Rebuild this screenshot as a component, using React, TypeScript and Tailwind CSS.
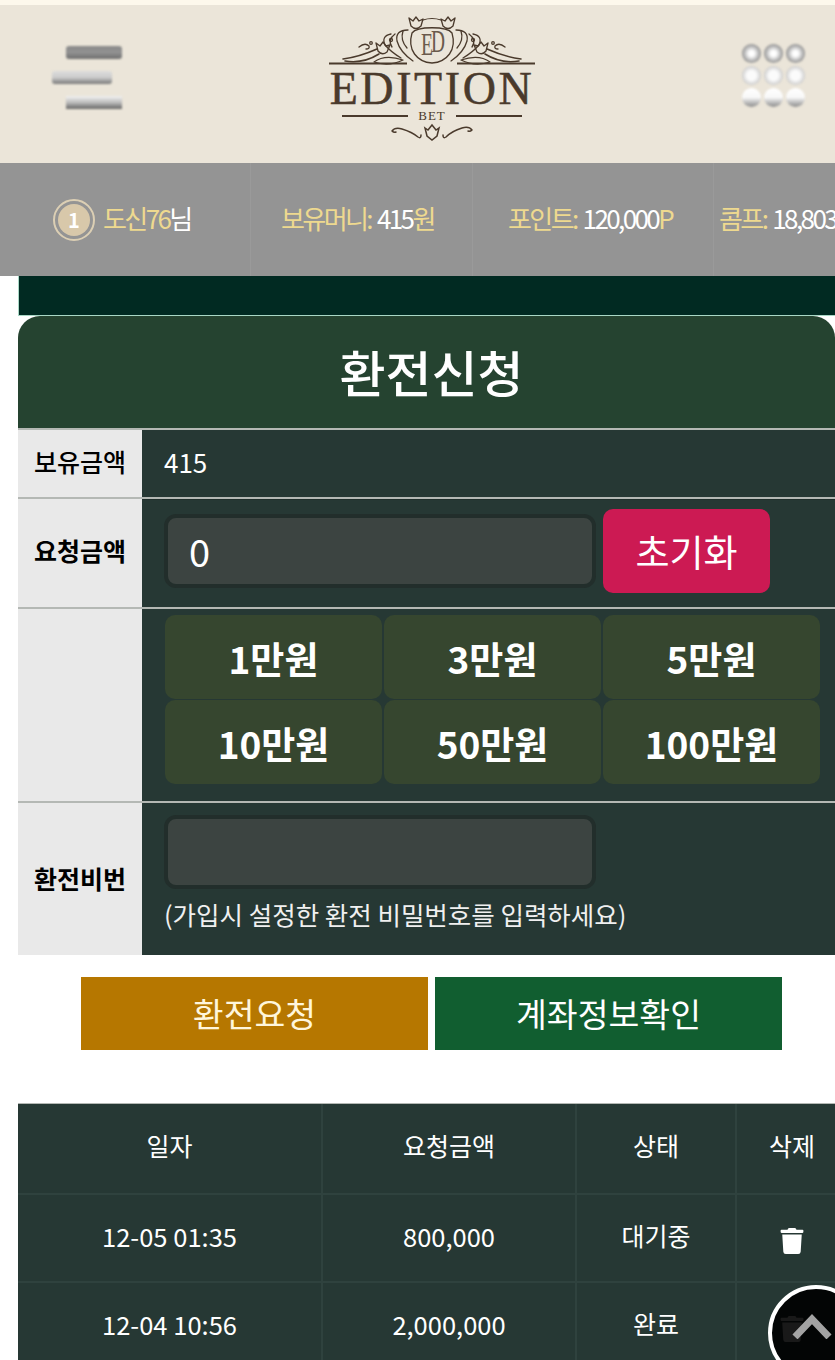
import { FaTrash } from 'react-icons/fa';

const amounts = ['1만원', '3만원', '5만원', '10만원', '50만원', '100만원'];

const history = [
  { date: '12-05 01:35', amount: '800,000', status: '대기중' },
  { date: '12-04 10:56', amount: '2,000,000', status: '완료' },
];

function LogoHalf() {
  return (
    <g fill="none" stroke="#4a3a2c" strokeWidth="1.3" strokeLinecap="round" strokeLinejoin="round">
      {/* top tulip */}
      <path d="M80 2 L84 5 L87 1 L90 5 L94 3 L92 10 Q87 15 82 10 Z" />
      {/* side scrolls */}
      <path d="M79 14 Q66 14 68 25 Q71 36 84 45" />
      <path d="M74 15 Q71 24 78 32" />
      <path d="M62 18 Q52 20 56 29 Q62 36 72 42" />
      <path d="M66 18 Q58 24 63 31" />
      <circle cx="62" cy="24" r="1.5" />
      {/* small tulip + branch */}
      <path d="M47 27 L51 30 L54 26 L57 30 L61 29 L58 36 Q53 40 49 35 Z" />
      <path d="M14 43 Q30 41 48 33" strokeWidth="1.6" />
      <path d="M16 45 Q34 48 50 38" strokeWidth="1.6" />
      <path d="M30 31 Q36 26 40 30 Q41 33 37 33" />
      <circle cx="42" cy="27" r="1.3" />
      {/* leaf */}
      <path d="M45 46 Q56 38 74 44 Q60 51 45 46 Z" />
    </g>
  );
}

function Logo() {
  return (
    <div className="w-[206px] flex flex-col items-center">
      <svg width="206" height="49" viewBox="0 0 206 49" className="block">
        <LogoHalf />
        <g transform="translate(206,0) scale(-1,1)">
          <LogoHalf />
        </g>
        <path d="M94 4 Q103 1 112 4" fill="none" stroke="#4a3a2c" strokeWidth="1.2" />
        <path
          d="M83 17 C78 34 88 46 103 47 C118 46 128 34 123 17 C118 10 88 10 83 17 Z"
          fill="#ebe5d9"
          stroke="#4a3a2c"
          strokeWidth="1.3"
        />
        <text x="92" y="39" fontFamily="Liberation Serif" fontSize="32" fill="#6a5a4c" textLength="12" lengthAdjust="spacingAndGlyphs">E</text>
        <text x="102" y="36" fontFamily="Liberation Serif" fontSize="32" fill="#6a5a4c" textLength="14" lengthAdjust="spacingAndGlyphs">D</text>
        <path d="M0 47.5 H78 M128 47.5 H206" stroke="#4a3a2c" strokeWidth="1.8" />
      </svg>
      <div className="-mt-[1px] h-[44px] leading-[49px] text-[46px] tracking-[2.6px] whitespace-nowrap font-['Liberation_Serif',serif] text-[#4a3a2c] [-webkit-text-stroke:0.5px_#4a3a2c]">
        EDITION
      </div>
      <div className="flex items-center gap-[10px] h-[15px]">
        <span className="w-[66px] h-[2px] bg-[#4a3a2c]" />
        <span className="text-[13px] leading-[15px] tracking-[1px] font-['Liberation_Serif',serif] text-[#4a3a2c]">BET</span>
        <span className="w-[66px] h-[2px] bg-[#4a3a2c]" />
      </div>
      <svg width="84" height="18" viewBox="0 0 84 18" className="block" fill="none" stroke="#4a3a2c" strokeWidth="1.5" strokeLinecap="round">
        <path d="M2 8 Q5 4 12 6 Q22 9 28 14 Q31 16 31 12 M2 8 Q4 10 6 9" />
        <path d="M82 7 Q79 3 72 5 Q62 8 56 14 Q53 16 53 12 M82 7 Q80 9 78 8" />
        <path d="M35 5 L38 7 L42 2 L46 7 L49 5 L47 13 L42 17 L37 13 Z" />
      </svg>
    </div>
  );
}

function MenuIcon() {
  return (
    <div className="w-[70px] -mt-[14px] flex flex-col gap-[12px] blur-[1px]">
      <span className="ml-[14px] w-[56px] h-[13px] rounded-[3px] bg-linear-to-b from-[#8a8a8a] via-[#929292] to-[#6e6e6e]" />
      <span className="w-[60px] h-[13px] rounded-[3px] bg-linear-to-b from-[#dcdcdc] via-[#cccccc] to-[#777777]" />
      <span className="ml-[14px] w-[56px] h-[13px] bg-linear-to-b from-[#f4f4f4] via-[#bcbcbc] to-[#666666]" />
    </div>
  );
}

function GridIcon() {
  const dots = [
    'bg-[radial-gradient(circle,#ffffff_20%,#b4b4b4_55%,#7c7c7c_80%)]',
    'bg-[radial-gradient(circle,#ffffff_20%,#b4b4b4_55%,#7c7c7c_80%)]',
    'bg-[radial-gradient(circle,#ffffff_20%,#b4b4b4_55%,#7c7c7c_80%)]',
    'bg-[radial-gradient(circle,#fbfbfb_35%,#d4d4d4_65%,#a0a0a0_88%)]',
    'bg-[radial-gradient(circle,#fbfbfb_35%,#d4d4d4_65%,#a0a0a0_88%)]',
    'bg-[radial-gradient(circle,#fbfbfb_35%,#d4d4d4_65%,#a0a0a0_88%)]',
    'bg-linear-to-b from-[#ffffff] via-[#f8f8f8] to-[#8a8a8a]',
    'bg-linear-to-b from-[#ffffff] via-[#f8f8f8] to-[#8a8a8a]',
    'bg-linear-to-b from-[#ffffff] via-[#f8f8f8] to-[#8a8a8a]',
  ];
  return (
    <div className="w-[63px] -mt-[17px] grid grid-cols-3 gap-x-[3px] gap-y-[3px] blur-[0.8px]">
      {dots.map((cls, i) => (
        <span key={i} className={`h-[19px] rounded-full ${cls}`} />
      ))}
    </div>
  );
}

export default function App() {
  const labelCls = "w-[124px] shrink-0 bg-[#e9e9e9] flex items-center justify-center text-[25px] text-black";
  const cellCls = 'border-r-2 border-b-2 border-[#2f423e]';

  return (
    <div className="relative w-[835px] h-[1360px] overflow-hidden bg-white font-['Noto_Sans_CJK_KR',sans-serif]">
      <div className="h-[5px] bg-[#fdf8ec]" />

      <header className="h-[158px] bg-[#ebe5d9] flex items-start justify-between pl-[52px] pr-[30px]">
        <div className="self-center">
          <MenuIcon />
        </div>
        <div className="pt-[11px]">
          <Logo />
        </div>
        <div className="self-center">
          <GridIcon />
        </div>
      </header>

      <div className="h-[113px] bg-[#949494] grid grid-cols-[250px_222px_241px_122px] text-[26px] tracking-[-2.6px] whitespace-nowrap overflow-hidden">
        <div className="flex items-center pl-[53px] gap-[8px]">
          <span className="w-[42px] h-[42px] rounded-full border-2 border-[#dccfb4] flex items-center justify-center shrink-0">
            <span className="w-[32px] h-[32px] rounded-full bg-[#d8c8aa] flex items-center justify-center text-[20px] font-bold tracking-normal text-white">1</span>
          </span>
          <span className="text-[#eed98f] pb-[4px]">도신76<span className="text-white">님</span></span>
        </div>
        <div className="border-l border-[#9a9a9a] flex items-center pl-[30px] pb-[4px] text-[#eed98f]">
          보유머니:<span className="text-white ml-[6px]">415</span>원
        </div>
        <div className="border-l border-[#9a9a9a] flex items-center pl-[35px] pb-[4px] text-[#eed98f]">
          포인트:<span className="text-white ml-[6px]">120,000</span>P
        </div>
        <div className="border-l border-[#9a9a9a] flex items-center pl-[5px] pb-[4px] text-[#eed98f]">
          콤프:<span className="text-white ml-[6px]">18,803</span>
        </div>
      </div>

      <div className="ml-[18px] h-[40px] bg-[#012a22] border-b border-l border-[#a9d8c6]" />

      <main className="ml-[18px]">
        <h1 className="h-[112px] rounded-t-[22px] bg-[#254330] flex items-center justify-center text-[50px] font-medium text-white leading-none pb-[2px] pl-[10px]">
          환전신청
        </h1>

        <div className="flex h-[69px] border-t-2 border-[#b4b8b4]">
          <div className={`${labelCls} font-medium pb-[4px]`}>보유금액</div>
          <div className="flex-1 bg-[#263834] flex items-center pl-[22px] pb-[5px] text-[26px] text-white">415</div>
        </div>

        <div className="flex h-[110px] border-t-2 border-[#b4b8b4]">
          <div className={`${labelCls} font-bold pb-[5px]`}>요청금액</div>
          <div className="flex-1 bg-[#263834] flex items-center pl-[22px] pb-[6px] gap-[7px] border-t border-[#1f2e2b]">
            <div className="w-[432px] h-[74px] rounded-[12px] border-4 border-[#222e2b] bg-[#3c4441] flex items-center pl-[21px] text-[38px] text-white">0</div>
            <button className="w-[167px] h-[84px] rounded-[10px] bg-[#cc1a53] pt-[3px] text-[37px] text-white">초기화</button>
          </div>
        </div>

        <div className="flex h-[194px] border-t-2 border-[#b4b8b4]">
          <div className={labelCls} />
          <div className="flex-1 bg-[#263834] pl-[23px] pt-[6px]">
            <div className="grid grid-cols-[217px_217px_217px] gap-x-[2px] gap-y-[1px]">
              {amounts.map((a) => (
                <button key={a} className="h-[84px] rounded-[10px] bg-[#36462f] pt-[3px] text-[37px] font-bold text-white">{a}</button>
              ))}
            </div>
          </div>
        </div>

        <div className="flex h-[154px] border-t-2 border-[#b4b8b4]">
          <div className={`${labelCls} font-bold`}>환전비번</div>
          <div className="flex-1 bg-[#263834] pl-[22px] pt-[12px]">
            <div className="w-[432px] h-[74px] rounded-[12px] border-4 border-[#222e2b] bg-[#3c4441]" />
            <p className="mt-[7px] text-[25.5px] leading-[36px] text-[#f0f0f0] whitespace-nowrap">(가입시 설정한 환전 비밀번호를 입력하세요)</p>
          </div>
        </div>
      </main>

      <div className="flex justify-start gap-[7px] pl-[81px] mt-[22px]">
        <button className="w-[347px] h-[73px] bg-[#b67700] text-[33.5px] text-[#fff6dc]">환전요청</button>
        <button className="w-[347px] h-[73px] bg-[#115e30] text-[33.5px] text-white">계좌정보확인</button>
      </div>

      <div className="ml-[18px] mt-[53px] w-[829px] border-t border-[#b4b8b4]">
        <table className="w-full table-fixed bg-[#263834] text-white">
          <thead>
            <tr className="h-[90px] text-[25px]">
              <th className={`w-[304px] font-normal pb-[6px] ${cellCls}`}>일자</th>
              <th className={`w-[254px] font-normal pb-[6px] ${cellCls}`}>요청금액</th>
              <th className={`w-[160px] font-normal pb-[6px] ${cellCls}`}>상태</th>
              <th className="font-normal pb-[6px] border-b-2 border-[#2f423e]">삭제</th>
            </tr>
          </thead>
          <tbody>
            {history.map((h) => (
              <tr key={h.date} className="h-[88px] text-[25.5px] text-center">
                <td className={`pb-[4px] ${cellCls}`}>{h.date}</td>
                <td className={`pb-[4px] ${cellCls}`}>{h.amount}</td>
                <td className={`pb-[4px] text-[25px] ${cellCls}`}>{h.status}</td>
                <td className="pb-[2px] border-b-2 border-[#2f423e]">
                  <FaTrash className="inline-block text-[26px]" />
                </td>
              </tr>
            ))}
          </tbody>
        </table>
      </div>

      {/* scroll to top */}
      <button className="absolute left-[768px] top-[1285px] w-[96px] h-[96px] rounded-full border-[4px] border-white bg-black/90 flex items-start justify-start">
        <svg width="40" height="26" viewBox="0 0 40 26" className="ml-[20px] mt-[24px]" fill="none" stroke="#a3a3a3" strokeWidth="7">
          <path d="M3 24 L20 6 L37 24" />
        </svg>
      </button>
    </div>
  );
}
